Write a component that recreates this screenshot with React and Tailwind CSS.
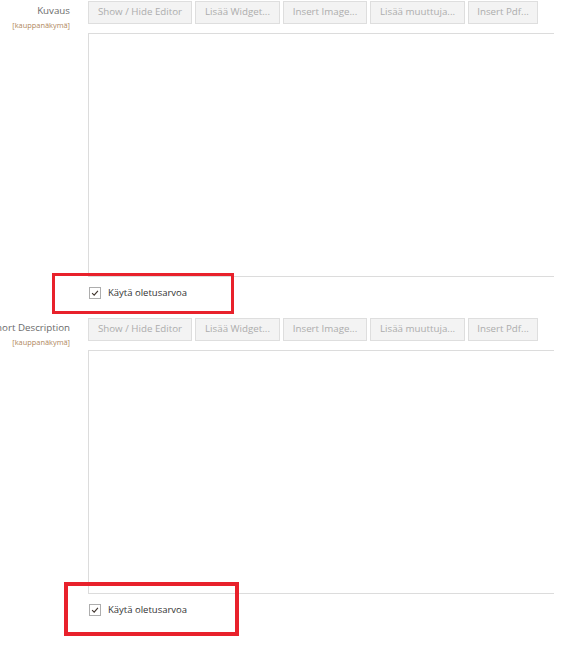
const buttons = ['Show / Hide Editor', 'Lisää Widget...', 'Insert Image...', 'Lisää muuttuja...', 'Insert Pdf...'];
const widths = ['w-[104px]', 'w-[85px]', 'w-[84px]', 'w-[95px]', 'w-[70px]'];

function Check() {
  return (
    <span className="flex h-[12px] w-[12px] items-center justify-center border border-[#adadad] bg-white">
      <svg viewBox="0 0 12 12" className="h-[10px] w-[10px]">
        <path d="M2.5 6.2 L5 8.5 L9.5 3.5" fill="none" stroke="#41362f" strokeWidth="1.4" />
      </svg>
    </span>
  );
}

function Field({ label }) {
  return (
    <div className="flex">
      <div className="flex w-[70px] shrink-0 flex-col items-end pt-[4px]">
        <div className="flex w-full justify-end whitespace-nowrap text-[9.75px] leading-[14px] text-[#6b6b6b]">{label}</div>
        <div className="mt-[2px] whitespace-nowrap text-[7.4px] leading-[10px] text-[#b0875c]">[kauppanäkymä]</div>
      </div>
      <div className="ml-[18px] flex-1">
        <div className="mt-px flex gap-[3px]">
          {buttons.map((b, i) => (
            <div
              key={b}
              className={`flex h-[23px] ${widths[i]} items-center justify-center border border-[#dedede] bg-[#f3f3f3] text-[9.75px] text-[#adadad]`}
            >
              {b}
            </div>
          ))}
        </div>
        <div className="mt-[9px] h-[244px] w-[466px] border-y border-l border-[#dcdcdc] bg-white" />
        <div className="flex h-[32px] items-center gap-[7px] pl-px">
          <Check />
          <span className="text-[9.5px] text-[#333]">Käytä oletusarvoa</span>
        </div>
      </div>
    </div>
  );
}

export default function App() {
  return (
    <div className="relative h-[650px] w-[576px] overflow-hidden bg-white font-['Open_Sans',sans-serif]">
      <div className="flex flex-col gap-[8px]">
        <Field label="Kuvaus" />
        <Field label="Short Description" />
      </div>
      <div className="absolute left-[52px] top-[273px] h-[41px] w-[182px] border-[3px] border-[#e8212b]" />
      <div className="absolute left-[64px] top-[582px] h-[54px] w-[175px] border-[4px] border-[#e8212b]" />
    </div>
  );
}
